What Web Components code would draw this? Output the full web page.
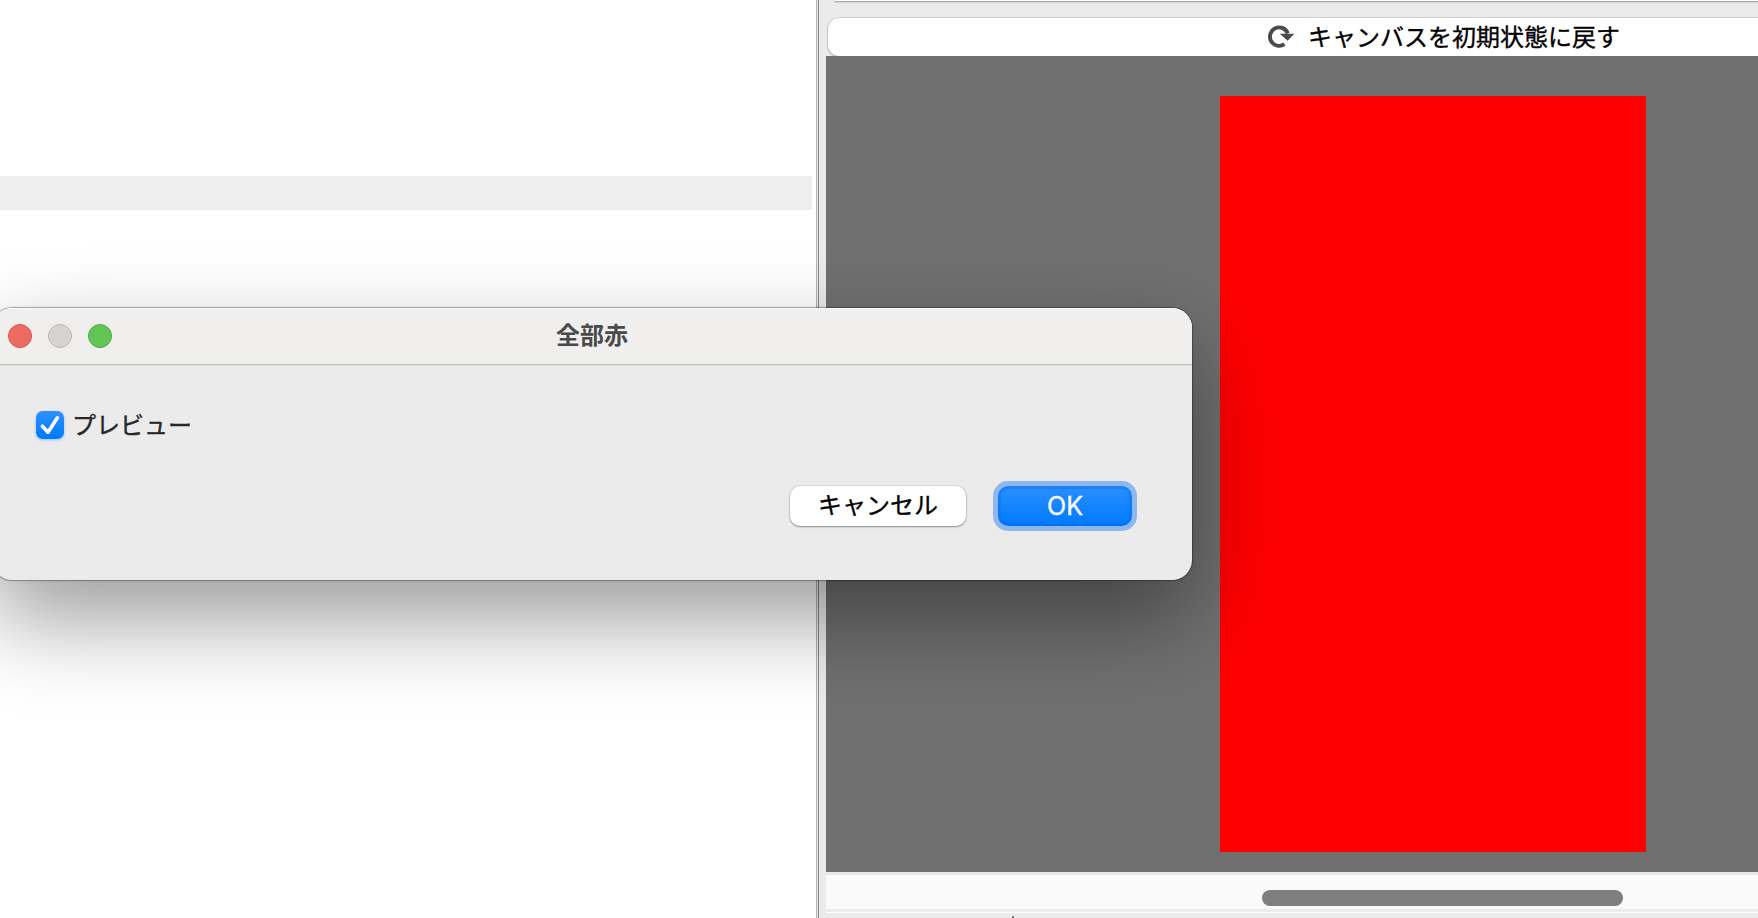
<!DOCTYPE html>
<html lang="ja">
<head>
<meta charset="utf-8">
<title>全部赤</title>
<style>
html, body { margin: 0; height: 100%; overflow: hidden; background: #fff; }
body { font-family: "Noto Sans CJK JP", "Noto Sans", sans-serif; font-size: 24px; color: #000; }
</style>
</head>
<body>
<app-shell>
  <side-list slot="side"></side-list>
  <canvas-pane slot="main"><span slot="reset">キャンバスを初期状態に戻す</span></canvas-pane>
  <plugin-dialog slot="dialog">
    <span slot="title">全部赤</span>
    <check-box>プレビュー</check-box>
    <push-button slot="actions" style="width:176px">キャンセル</push-button>
    <push-button slot="actions" primary style="width:134px">OK</push-button>
  </plugin-dialog>
</app-shell>
<script>
function element(name, html) {
  customElements.define(name, class extends HTMLElement {
    constructor() {
      super();
      this.attachShadow({ mode: "open" }).innerHTML = html;
    }
  });
}

element("app-shell", `
<style>
  :host { position: relative; display: grid; grid-template-columns: 816px 3px 1fr; height: 918px; overflow: hidden; }
  .divider { box-sizing: border-box; background: #ececec; border-left: 1px solid #b4b4b4; border-right: 1px solid #868686; }
</style>
<slot name="side"></slot><div class="divider"></div><slot name="main"></slot><slot name="dialog"></slot>`);

element("side-list", `
<style>
  :host { display: block; padding: 176px 4px 0 0; background: #fff; }
  .row { height: 34px; background: #efefef; }
</style>
<div class="row"></div>`);

element("canvas-pane", `
<style>
  :host { display: flex; flex-direction: column; min-width: 0; padding-left: 7px; background: #ebebeb; overflow: hidden; }
  .prev { box-sizing: border-box; flex: none; height: 2px; margin: 0 -20px 16px 8px; background: #fff; border-bottom: 1px solid #a9adab; border-radius: 0 0 0 6px; box-shadow: 0 1px 1px rgba(0,0,0,.12); }
  .reset { box-sizing: border-box; flex: none; display: flex; align-items: center; height: 38px; margin: 0 -20px 0 2px; padding-left: 438px; background: #fff; border-radius: 11px 0 0 11px; box-shadow: 0 0 0 1px rgba(0,0,0,.09), 0 1px 2px rgba(0,0,0,.25); white-space: nowrap; line-height: 36px; -webkit-text-stroke: .35px; }
  .reset svg { width: 30px; height: 28px; margin: 0 12px 2px 0; flex: none; }
  .label { padding-bottom: 2px; }
  .view { position: relative; flex: none; height: 816px; background: #707070; box-sizing: border-box; padding: 40px 0 0 394px; }
  .art { width: 426px; height: 756px; background: #f00; }
  .track { box-sizing: border-box; flex: none; height: 40px; border-top: 3px solid #e7e7e7; border-bottom: 3px solid #ececec; background: #fafafa; padding: 15px 0 0 436px; }
  .thumb { width: 361px; height: 16px; border-radius: 8px; background: #7e7e7e; }
  .foot { height: 5px; border-top: 1px solid #fff; padding-left: 186px; }
  .tick { width: 2px; height: 2px; margin-top: 3px; background: #808080; }
</style>
<div class="prev"></div>
<div class="reset">
  <svg viewBox="0 0 30 28"><path d="M18.4 22.2A9.2 9.2 0 1 1 21.8 11.5" fill="none" stroke="#4b4b4b" stroke-width="3.9"/><path d="M13.8 11.8L28.4 11.8L21.6 18.8Z" fill="#4b4b4b"/></svg>
  <span class="label"><slot name="reset"></slot></span>
</div>
<div class="view"><div class="art"></div></div>
<div class="track"><div class="thumb"></div></div>
<div class="foot"><div class="tick"></div></div>`);

element("plugin-dialog", `
<style>
  :host { position: absolute; left: -8px; top: 308px; width: 1200px; height: 272px; box-sizing: border-box; display: flex; flex-direction: column; border-radius: 20px; background: #ebebeb; overflow: hidden;
    box-shadow: 0 0 0 1px rgba(0,0,0,.24), 0 0 3px rgba(0,0,0,.22), 0 38px 90px rgba(0,0,0,.4); }
  header { box-sizing: border-box; display: grid; grid-template-columns: 1fr auto 1fr; align-items: center; height: 57px; padding: 0 16px; background: #f0efed; border-bottom: 1px solid #c2c2c1; box-shadow: inset 0 1px #fafafa, 0 1px #dcdcdc; }
  .lights { display: flex; gap: 16px; }
  .lights i { box-sizing: border-box; width: 24px; height: 24px; border-radius: 50%; border: 1px solid; }
  .close { background: #ed6b60; border-color: #d4584e !important; }
  .min { background: #d5d4d2; border-color: #b6b5b3 !important; }
  .zoom { background: #62c555; border-color: #51a73e !important; }
  .title { font-weight: 700; color: #4a4a4a; line-height: 36px; padding-bottom: 4px; }
  .body { padding: 39px 0 0 44px; height: 42px; }
  footer { display: flex; gap: 32px; justify-content: flex-end; padding: 40px 60px 0 0; }
</style>
<header><div class="lights"><i class="close"></i><i class="min"></i><i class="zoom"></i></div><div class="title"><slot name="title"></slot></div></header>
<div class="body"><slot></slot></div>
<footer><slot name="actions"></slot></footer>`);

element("check-box", `
<style>
  :host { display: flex; align-items: center; height: 42px; gap: 8px; color: #262626; line-height: 36px; -webkit-text-stroke: .35px; }
  .box { width: 28px; height: 28px; border-radius: 6.5px; background: linear-gradient(#2e91ff, #007aff); box-shadow: 0 1px 3px rgba(0,122,255,.35); }
  svg { display: block; width: 28px; height: 28px; }
  .label { display: block; padding-bottom: 2px; }
</style>
<div class="box"><svg viewBox="0 0 28 28"><path d="M6.4 15.2L12 21.2L21.4 6.8" fill="none" stroke="#fff" stroke-width="3.6" stroke-linecap="round" stroke-linejoin="round"/></svg></div>
<span class="label"><slot></slot></span>`);

element("push-button", `
<style>
  :host { box-sizing: border-box; display: flex; justify-content: center; height: 40px; border-radius: 10px; background: #fff; line-height: 36px; -webkit-text-stroke: .35px;
    box-shadow: 0 0 0 1px rgba(0,0,0,.07), 0 1px 2px rgba(0,0,0,.35); }
  :host([primary]) { color: #fff; background: linear-gradient(#2a8fff, #007aff); font-family: Inter, sans-serif; font-weight: 400; font-size: 25px; line-height: 40px;
    box-shadow: 0 0 0 5px #8fb7ef, inset 0 0 0 3px rgba(0,105,235,.35); }
</style>
<slot></slot>`);
</script>
</body>
</html>
